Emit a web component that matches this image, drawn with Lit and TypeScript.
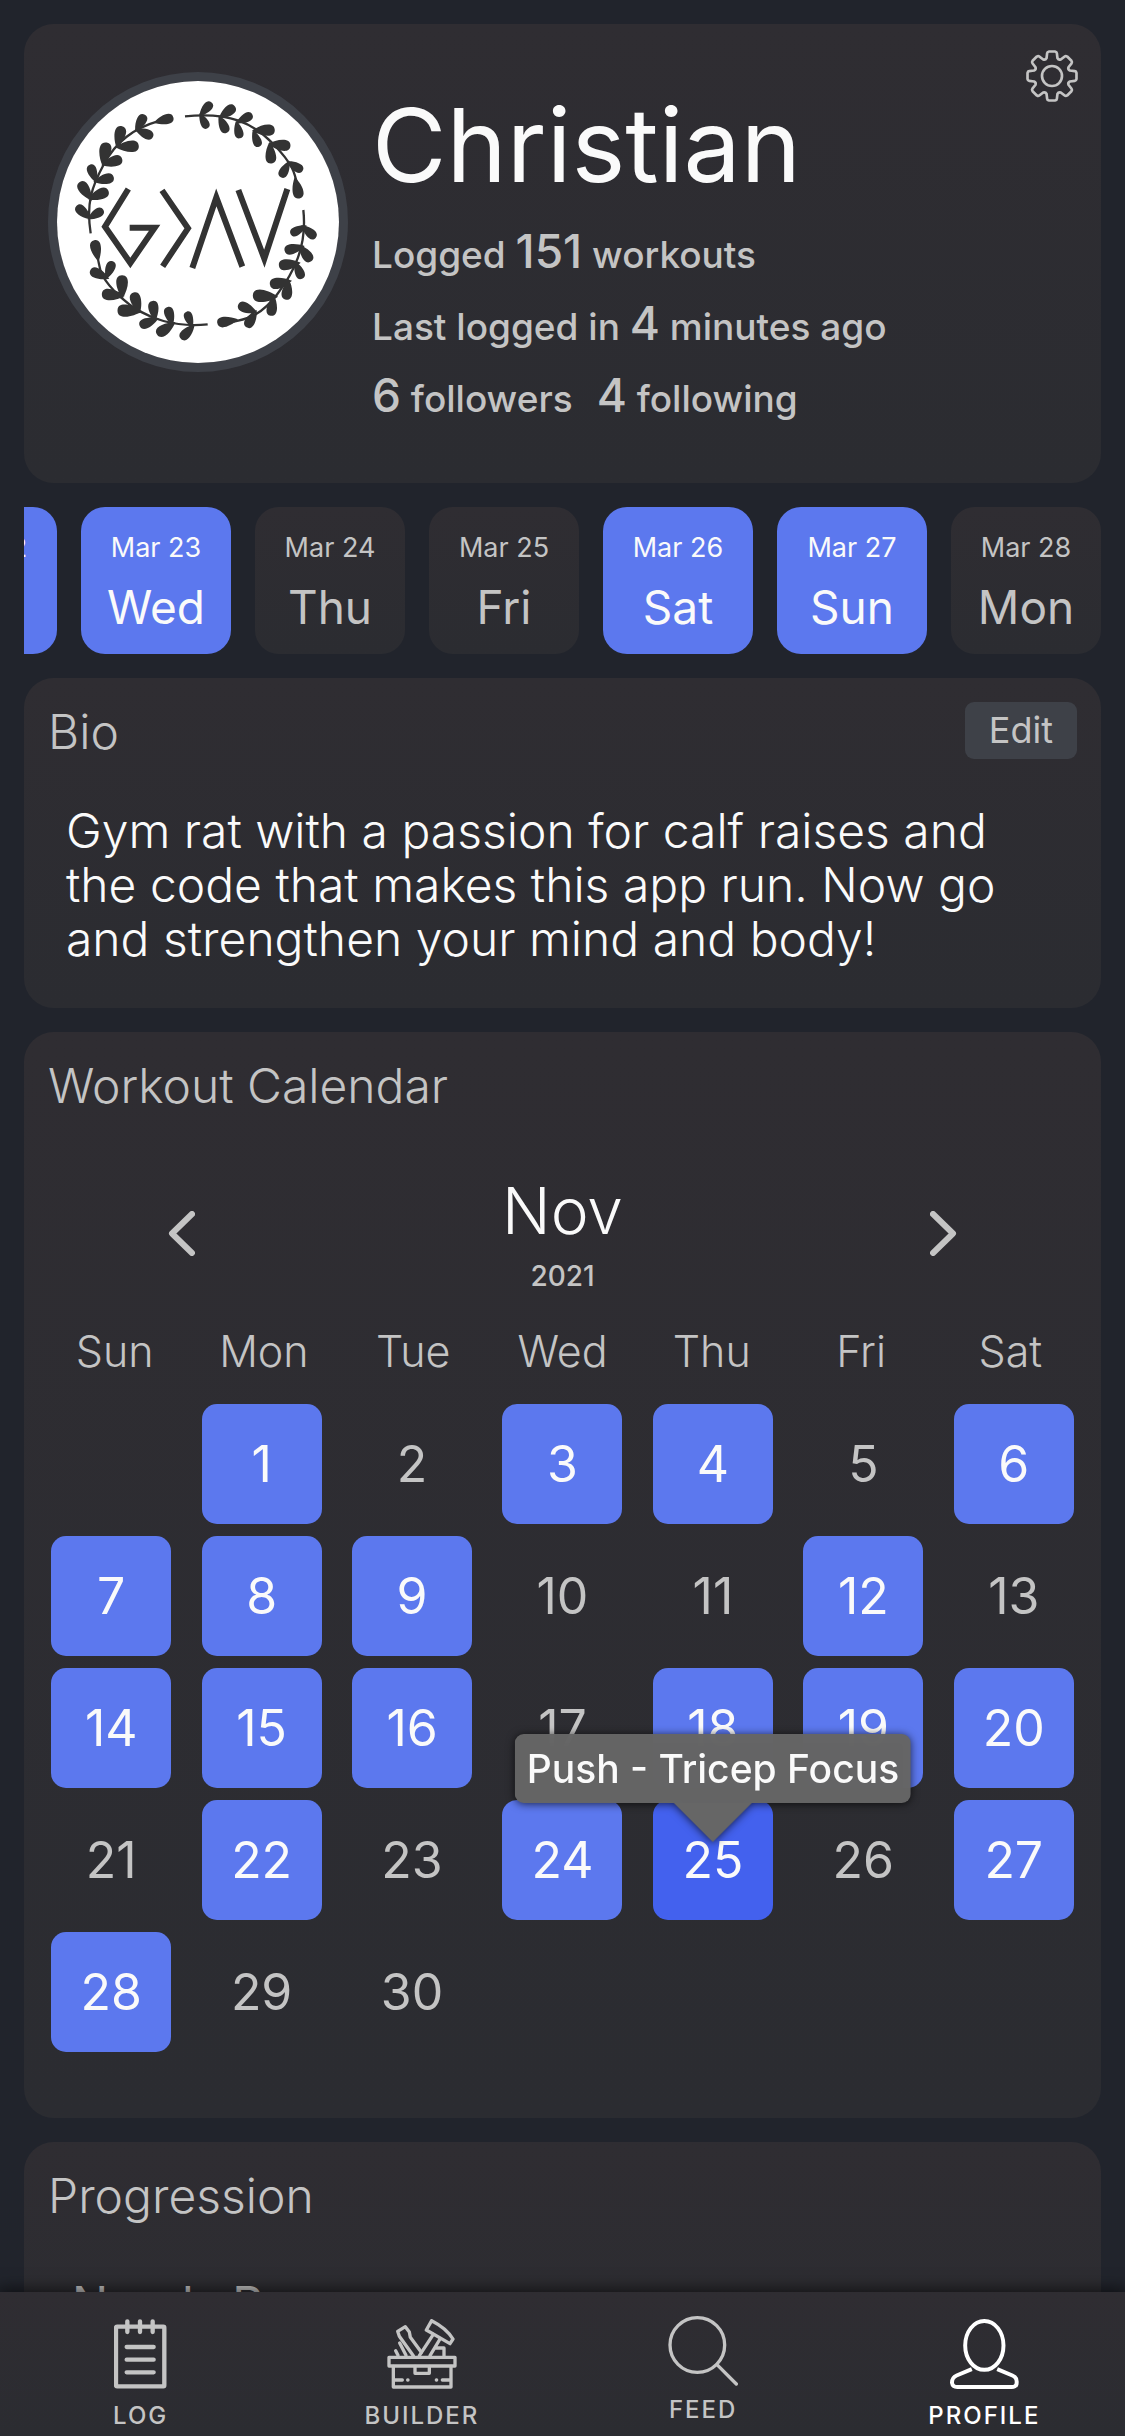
import { LitElement, html, svg, css } from "lit";
import { customElement, state } from "lit/decorators.js";
import { classMap } from "lit/directives/class-map.js";

type Pt = [number, number];

/** A teardrop leaf growing from its base point to its tip. */
const leaf = ([bx, by]: Pt, [tx, ty]: Pt) => {
  const dx = tx - bx;
  const dy = ty - by;
  const at = (a: number, b: number) => `${bx + dx * a - dy * b} ${by + dy * a + dx * b}`;
  return `M${at(0, 0)}C${at(0.35, -0.26)} ${at(1.02, -0.42)} ${at(1.02, 0)}C${at(1.02, 0.38)} ${at(0.45, 0.28)} ${at(0, 0)}Z`;
};

const LEAVES: [Pt, Pt][] = [
  [[598, 350], [634, 308]], [[598, 340], [622, 384]],
  [[656, 356], [704, 320]], [[656, 346], [680, 397]],
  [[708, 370], [756, 344]], [[708, 362], [720, 414]],
  [[756, 392], [823, 390]], [[758, 390], [777, 439]],
  [[804, 432], [870, 438]], [[808, 426], [814, 489]],
  [[860, 484], [907, 512]], [[868, 482], [843, 531]],
  [[884, 532], [898, 594]],
  [[920, 676], [873, 702]], [[904, 676], [946, 713]],
  [[914, 738], [855, 752]], [[896, 734], [933, 783]],
  [[902, 788], [838, 796]], [[884, 784], [906, 835]],
  [[876, 842], [811, 853]], [[866, 836], [858, 898]],
  [[834, 890], [760, 886]], [[822, 886], [812, 946]],
  [[772, 938], [716, 914]], [[770, 930], [740, 981]],
  [[714, 958], [653, 969]],
  [[578, 984], [560, 936]], [[584, 972], [544, 1016]],
  [[518, 978], [503, 922]], [[526, 966], [472, 1003]],
  [[466, 964], [458, 904]], [[476, 954], [420, 977]],
  [[420, 940], [401, 879]], [[426, 934], [354, 931]],
  [[368, 896], [366, 827]], [[374, 888], [307, 881]],
  [[318, 838], [338, 785]], [[328, 836], [272, 811]],
  [[296, 784], [283, 722]],
  [[274, 658], [230, 619]], [[262, 658], [309, 630]],
  [[276, 602], [240, 547]], [[264, 598], [324, 573]],
  [[290, 548], [270, 495]], [[280, 546], [340, 532]],
  [[308, 498], [320, 429]], [[304, 496], [365, 477]],
  [[350, 444], [366, 380]], [[346, 442], [415, 438]],
  [[406, 396], [434, 345]], [[404, 388], [458, 410]],
  [[462, 368], [519, 353]],
];

const avatar = svg`
  <rect x="144" y="216" width="900" height="900" fill="#fff" />
  <g fill="none" stroke="#333" stroke-width="7">
    <path d="M555 349C690 335 760 370 820 432S885 520 893 560" />
    <path d="M910 630C922 740 880 820 830 885S740 955 700 966" />
    <path d="M623 973C540 982 440 965 360 890S305 790 290 770" />
    <path d="M272 700C258 610 275 560 312 492S400 385 480 362" />
  </g>
  <path fill="#333" d=${LEAVES.map(([b, t]) => leaf(b, t)).join("")} />
  <g fill="none" stroke="#333" stroke-width="18">
    <path d="M385 567L315 680L391 789L464 683L389 683" />
    <path d="M486 571L564 685L488 799" />
    <path d="M577 804L649 592L727 800" />
    <path d="M715 570L793 776L862 567" />
  </g>`;

const gearPath = () => {
  let d = "";
  for (let i = 0; i < 8; i++) {
    const at = (r: number, deg: number) => {
      const a = ((i * 45 + deg) * Math.PI) / 180;
      return `${(r * Math.cos(a)).toFixed(2)} ${(r * Math.sin(a)).toFixed(2)}`;
    };
    d += `${i ? "L" : "M"}${at(56, -17)}L${at(70, -12)}Q${at(74, -11)} ${at(74, -7)}L${at(74, 7)}Q${at(74, 11)} ${at(70, 12)}L${at(56, 17)}Q${at(51, 22.5)} ${at(56, 28)}`;
  }
  return d + "Z";
};

const icons = {
  log: { box: "100 86 158 210", art: svg`
    <rect x="106" y="109" width="145" height="179" rx="3" stroke-width="13" />
    <path stroke-width="13" d="M140 93v32M178 93v32M216 93v32M138 170h81M138 208h81M138 246h81" />` },
  builder: { box: "919 86 210 210", art: svg`
    <g stroke-width="10">
      <rect x="925" y="201" width="198" height="26" />
      <path d="M938 228V290H1111V228M1003 228v21h43v-21M943 269h22M981 269h1M1067 269h1M1085 269h22" />
      <path d="M998 196L956 138L951 123L974 109L986 125L989 141L1022 186" />
      <path d="M1016 196L1058 132M1048 196L1078 146M957 158L976 195M945 181L952 195M1068 173H1090V196" />
      <path d="M1053 91L1037 119L1108 160L1117 146Q1098 114 1053 91Z" />
    </g>` },
  feed: { box: "115 77 210 210", art: svg`
    <circle cx="203" cy="164" r="82" stroke-width="10" />
    <path stroke-width="10" d="M262 223L320 281" />` },
  profile: { box: "962 84 210 212", art: svg`
    <ellipse cx="1066" cy="164" rx="58" ry="74" stroke-width="12" />
    <path stroke-width="12" stroke-linecap="butt" d="M1028 236L982 255Q968 261 968 277Q970 290 984 290H1149Q1164 290 1164 276Q1165 261 1151 255L1105 236" />` },
};

const STRIP = [
  { date: "Mar 22", day: "Tue", on: true },
  { date: "Mar 23", day: "Wed", on: true },
  { date: "Mar 24", day: "Thu", on: false },
  { date: "Mar 25", day: "Fri", on: false },
  { date: "Mar 26", day: "Sat", on: true },
  { date: "Mar 27", day: "Sun", on: true },
  { date: "Mar 28", day: "Mon", on: false },
];

const WEEKDAYS = ["Sun", "Mon", "Tue", "Wed", "Thu", "Fri", "Sat"];
const LOGGED = new Set([1, 3, 4, 6, 7, 8, 9, 12, 14, 15, 16, 18, 19, 20, 22, 24, 25, 27, 28]);
const WEEKS = Array.from({ length: 5 }, (_, w) =>
  Array.from({ length: 7 }, (_, d) => w * 7 + d).map((n) => (n >= 1 && n <= 30 ? n : 0)));

const TABS = [
  { id: "log", label: "LOG" },
  { id: "builder", label: "BUILDER" },
  { id: "feed", label: "FEED" },
  { id: "profile", label: "PROFILE" },
] as const;

@customElement("app-root")
export class AppRoot extends LitElement {
  @state() private selected = 25;

  static styles = css`
    :host {
      display: flex;
      flex-direction: column;
      height: 100vh;
      background: #21242c;
      color: #c4c4c4;
      font-family: Inter, "Open Sans", sans-serif;
      font-weight: 300;
    }
    * { box-sizing: border-box; }
    h1, h2, p { margin: 0; font-weight: inherit; }
    button { font: inherit; color: inherit; background: none; border: 0; padding: 0; cursor: pointer; }
    a { color: inherit; text-decoration: none; }
    svg { display: block; }

    main {
      flex: 1;
      min-height: 0;
      overflow-y: auto;
      scrollbar-width: none;
      display: flex;
      flex-direction: column;
      gap: 24px;
      padding: 24px 24px 0;
    }
    main > * { flex: none; }
    .card {
      border-radius: 30px;
      background: linear-gradient(#2f2d32, #2b2c31);
      padding: 24px;
    }
    .title { font-size: 48px; line-height: 60px; }

    .user { position: relative; display: flex; gap: 24px; padding: 48px 24px; }
    .avatar { width: 300px; height: 300px; border-radius: 50%; border: 9px solid #3e4148; overflow: hidden; flex: none; }
    .avatar svg { width: 300px; height: 300px; margin: -9px; }
    .name { font-size: 102px; line-height: 147px; color: #fafafa; font-weight: 400; }
    .facts { font-size: 37px; line-height: 72px; font-weight: 500; }
    .facts strong { font-size: 46px; line-height: 60px; font-weight: 500; }
    .facts a + a { margin-left: 24px; }
    .gear { position: absolute; top: 26px; right: 23px; }
    .gear svg { width: 52px; height: 52px; }

    .strip { display: flex; justify-content: flex-end; gap: 24px; overflow: hidden; }
    .day {
      flex: none;
      width: 150px;
      border-radius: 24px;
      padding: 18px 0 9px;
      text-align: center;
      background: linear-gradient(#2f2d32, #2b2c31);
    }
    .day.on { background: #5c78ee; color: #fafafa; }
    .date { display: block; font-size: 27px; line-height: 45px; font-weight: 400; }
    .wd { display: block; font-size: 46px; line-height: 75px; font-weight: 400; }

    .head { display: flex; justify-content: space-between; align-items: flex-start; }
    .edit { background: #3e4148; border-radius: 9px; font-size: 36px; line-height: 57px; padding: 0 24px; font-weight: 400; }
    .bio { color: #fafafa; font-size: 48px; line-height: 54px; padding: 42px 60px 18px 18px; }

    .calendar { padding: 24px 12px 54px; }
    .calendar .title { padding: 0 12px; }
    .month { display: flex; justify-content: space-between; align-items: center; padding: 51px 132px 21px; }
    .month svg { width: 27px; height: 45px; }
    .when { text-align: center; }
    .mon { font-size: 64px; line-height: 87px; color: #fafafa; }
    .year { font-size: 28px; line-height: 45px; font-weight: 500; }
    .grid { display: block; }
    .grid thead, .grid tbody { display: block; }
    .grid thead { padding: 0 4px; }
    .grid tr { display: grid; grid-template-columns: repeat(7, 1fr); }
    .grid th { font-weight: 300; font-size: 43px; line-height: 63px; padding: 0 0 21px; }
    .grid td { padding: 0 0 12px; display: flex; justify-content: center; }
    .cell {
      position: relative;
      width: 120px;
      height: 120px;
      border-radius: 15px;
      font-size: 50px;
      font-weight: 400;
    }
    .cell.on { background: #5c78ee; color: #fafafa; }
    .cell.sel { background: #4361ee; z-index: 1; }
    .tip {
      position: absolute;
      left: 50%;
      bottom: 117px;
      transform: translateX(-50%);
      white-space: nowrap;
      background: rgba(102, 102, 102, 0.98);
      color: #fafafa;
      font-size: 39px;
      line-height: 69px;
      font-weight: 500;
      padding: 0 12px;
      border-radius: 9px;
      filter: drop-shadow(0 1px 4px rgba(0, 0, 0, 0.7));
    }
    .tip::after {
      content: "";
      position: absolute;
      top: 100%;
      left: 50%;
      margin-left: -39px;
      border: 39px solid transparent;
      border-top-color: #666;
      border-bottom: 0;
    }

    .lift { font-size: 48px; line-height: 60px; padding: 48px 24px 60px; font-weight: 400; }

    nav {
      position: relative;
      flex: none;
      display: grid;
      grid-template-columns: repeat(4, 1fr);
      padding: 24px 0 0;
      background: linear-gradient(#2f2d32, #2b2c31);
      box-shadow: 0 0 15px 3px rgba(0, 0, 0, 0.6);
    }
    .tab { display: flex; flex-direction: column; align-items: center; gap: 12px; padding: 3px 0 5px; font-size: 24px; font-weight: 500; }
    .tab.feed { gap: 9px; padding-top: 0; }
    .tab svg { height: 70px; fill: none; stroke: currentColor; stroke-linecap: round; stroke-linejoin: round; }
    .tab span { line-height: 30px; letter-spacing: 2px; }
    .tab.current { color: #fff; }
  `;

  private card() {
    return html`<section class="card user">
      <div class="avatar"><svg viewBox="144 216 900 900" aria-hidden="true">${avatar}</svg></div>
      <div>
        <h1 class="name">Christian</h1>
        <p class="facts">Logged <strong>151</strong> workouts</p>
        <p class="facts">Last logged in <strong>4</strong> minutes ago</p>
        <p class="facts"><a href="#followers"><strong>6</strong> followers</a><a href="#following"><strong>4</strong> following</a></p>
      </div>
      <button class="gear" aria-label="Settings">
        <svg viewBox="-78 -78 156 156" fill="none" stroke="currentColor" stroke-width="8" stroke-linejoin="round">
          <path d=${gearPath()} /><circle r="30" />
        </svg>
      </button>
    </section>`;
  }

  private cell(n: number) {
    if (!n) return html`<td></td>`;
    const sel = n === this.selected && LOGGED.has(n);
    return html`<td>
      <button class=${classMap({ cell: true, on: LOGGED.has(n), sel })} @click=${() => (this.selected = n)}>
        ${n}${sel ? html`<span class="tip" role="tooltip">Push - Tricep Focus</span>` : ""}
      </button>
    </td>`;
  }

  private chevron(label: string, d: string) {
    return html`<button aria-label=${label}>
      <svg viewBox="0 0 27 45" fill="none" stroke="currentColor" stroke-width="6" stroke-linecap="round" stroke-linejoin="round"><path d=${d} /></svg>
    </button>`;
  }

  render() {
    return html`
      <main>
        ${this.card()}
        <div class="strip">
          ${STRIP.map((s) => html`<div class=${classMap({ day: true, on: s.on })}>
            <span class="date">${s.date}</span><span class="wd">${s.day}</span>
          </div>`)}
        </div>
        <section class="card">
          <div class="head"><h2 class="title">Bio</h2><button class="edit">Edit</button></div>
          <p class="bio">Gym rat with a passion for calf raises and the code that makes this app run. Now go and strengthen your mind and body!</p>
        </section>
        <section class="card calendar">
          <h2 class="title">Workout Calendar</h2>
          <div class="month">
            ${this.chevron("Previous month", "M24 3L4 22.5L24 42")}
            <div class="when"><p class="mon">Nov</p><p class="year">2021</p></div>
            ${this.chevron("Next month", "M3 3L23 22.5L3 42")}
          </div>
          <table class="grid">
            <thead><tr>${WEEKDAYS.map((d) => html`<th scope="col">${d}</th>`)}</tr></thead>
            <tbody>${WEEKS.map((w) => html`<tr>${w.map((n) => this.cell(n))}</tr>`)}</tbody>
          </table>
        </section>
        <section class="card">
          <h2 class="title">Progression</h2>
          <p class="lift">Needs R</p>
        </section>
      </main>
      <nav>
        ${TABS.map((t) => html`<a class=${classMap({ tab: true, [t.id]: true, current: t.id === "profile" })} href="#${t.id}">
          <svg viewBox=${icons[t.id].box} aria-hidden="true">${icons[t.id].art}</svg>
          <span>${t.label}</span>
        </a>`)}
      </nav>`;
  }
}
